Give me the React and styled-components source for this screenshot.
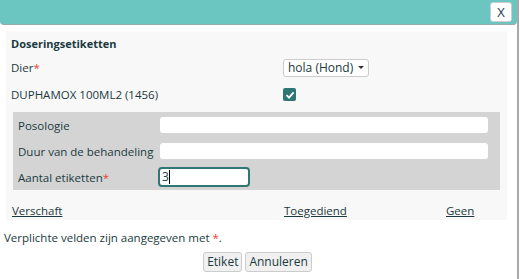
import React from "react";
import styled, { createGlobalStyle } from "styled-components";

const Global = createGlobalStyle`
  html, body { margin: 0; padding: 0; background: #fff; }
  body { font-family: "Open Sans", "Noto Sans", sans-serif; font-size: 11.5px; line-height: 17px; color: #1b3a40; }
  * { box-sizing: border-box; }
`;

const Dialog = styled.div`
  width: 519px;
  height: 279px;
  border-right: 2px solid #a8a8a8;
  display: flex;
  flex-direction: column;
`;

const TitleBar = styled.div`
  flex: none;
  height: 25px;
  background: #6bc5c1;
  border-bottom: 1px solid #9aa;
  border-bottom-left-radius: 4px;
  border-bottom-right-radius: 4px;
  display: flex;
  justify-content: flex-end;
  align-items: center;
  padding-right: 5px;
`;

const CloseBtn = styled.button`
  width: 22px;
  height: 20px;
  background: #fff;
  border: 1px solid #ccc;
  border-radius: 3px;
  font-family: "Open Sans", sans-serif;
  font-size: 13px;
  color: #1b3a50;
  padding: 0;
  line-height: 18px;
`;

const Panel = styled.div`
  margin: 6px 10px 0 6px;
  background: #f8f8f8;
  padding: 3px 5px 1px 5px;
  display: flex;
  flex-direction: column;
`;

const Heading = styled.div`
  font-weight: 700;
  font-size: 11px;
  height: 20px;
  line-height: 20px;
`;

const Row = styled.div`
  display: grid;
  grid-template-columns: 272px 1fr;
  align-items: center;
  height: 27px;
`;

const Req = styled.span`
  color: #e8452c;
`;

const Select = styled.div`
  display: inline-flex;
  align-items: center;
  gap: 5px;
  height: 18px;
  padding: 0 4px;
  border: 1px solid #ccc;
  border-radius: 3px;
  background: #fff;
  width: max-content;
  font-size: 12px;
`;

const Caret = styled.span`
  width: 0;
  height: 0;
  border-left: 3px solid transparent;
  border-right: 3px solid transparent;
  border-top: 3px solid #333;
`;

const Check = styled.span`
  width: 13px;
  height: 13px;
  border-radius: 2px;
  background: #2e7673;
  display: inline-flex;
  align-items: center;
  justify-content: center;
`;

const Box = styled.div`
  margin: 4px 2px 0 2px;
  background: #d4d4d4;
  padding: 0 12px 0 5px;
  display: flex;
  flex-direction: column;
`;

const FieldRow = styled.div`
  display: grid;
  grid-template-columns: 142px 1fr;
  align-items: center;
  height: 26px;
`;

const Input = styled.div`
  height: 16px;
  background: #fff;
  border-radius: 3px;
`;

const FocusInput = styled.div`
  width: 92px;
  height: 20px;
  margin-left: -2px;
  background: #fff;
  border: 2px solid #2e7673;
  border-radius: 4px;
  font-size: 12px;
  line-height: 16px;
  padding-left: 2px;
  display: flex;
  align-items: center;
`;

const Cursor = styled.span`
  display: inline-block;
  width: 1px;
  height: 14px;
  background: #000;
`;

const Links = styled.div`
  display: grid;
  grid-template-columns: 272px 162px 1fr;
  margin-top: 12px;
  padding-left: 1px;
`;

const Link = styled.a`
  color: #1b3a40;
  text-decoration: underline;
  cursor: pointer;
`;

const Note = styled.div`
  margin: 9px 0 0 4px;
`;

const Buttons = styled.div`
  display: flex;
  justify-content: center;
  gap: 3px;
  margin-top: 6px;
  padding-right: 2px;
`;

const Btn = styled.button`
  height: 20px;
  padding: 0 3px;
  background: #f0f0f0;
  border: 1px solid #ccc;
  border-radius: 3px;
  font-family: "Open Sans", sans-serif;
  font-size: 12px;
  color: #1b3a40;
  line-height: 18px;
`;

export default function App() {
  return (
    <>
      <Global />
      <Dialog>
        <TitleBar>
          <CloseBtn>X</CloseBtn>
        </TitleBar>
        <Panel>
          <Heading>Doseringsetiketten</Heading>
          <Row>
            <span>Dier<Req>*</Req></span>
            <Select>
              hola (Hond)
              <Caret />
            </Select>
          </Row>
          <Row>
            <span>DUPHAMOX 100ML2 (1456)</span>
            <Check>
              <svg width="10" height="10" viewBox="0 0 10 10">
                <path d="M1.5 5.2 L4 7.6 L8.6 2.4" stroke="#fff" strokeWidth="1.8" fill="none" />
              </svg>
            </Check>
          </Row>
          <Box>
            <FieldRow>
              <span>Posologie</span>
              <Input />
            </FieldRow>
            <FieldRow>
              <span>Duur van de behandeling</span>
              <Input />
            </FieldRow>
            <FieldRow>
              <span>Aantal etiketten<Req>*</Req></span>
              <FocusInput>3<Cursor /></FocusInput>
            </FieldRow>
          </Box>
          <Links>
            <Link>Verschaft</Link>
            <Link>Toegediend</Link>
            <Link>Geen</Link>
          </Links>
        </Panel>
        <Note>Verplichte velden zijn aangegeven met <Req>*</Req>.</Note>
        <Buttons>
          <Btn>Etiket</Btn>
          <Btn>Annuleren</Btn>
        </Buttons>
      </Dialog>
    </>
  );
}
